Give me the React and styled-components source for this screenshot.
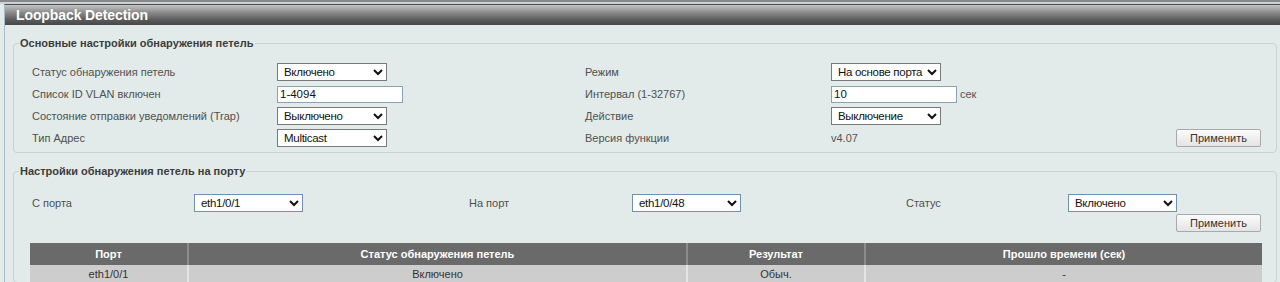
import styled, { createGlobalStyle } from 'styled-components';

const GlobalStyle = createGlobalStyle`
  html, body {
    margin: 0;
    padding: 0;
    background: #e2ebe9;
    font-family: "Liberation Sans", Arial, sans-serif;
  }
`;

const Page = styled.div`
  height: 282px;
  overflow: hidden;
  background: #e2ebe9;
`;

const TopStrip = styled.div`
  height: 2px;
  background: #8a8787;
  border-bottom: 2px solid #c6d3da;
`;

const Frame = styled.div`
  margin-left: 4px;
  border-left: 1px solid #a9bccb;
  border-top: 1px solid #4c4c4c;
  min-height: 278px;
`;

const TitleBar = styled.div`
  height: 20px;
  background: linear-gradient(to bottom, #c4c4c4 0%, #8f8f8f 35%, #5a5a5a 75%, #474747 100%);
  color: #fff;
  font-weight: bold;
  font-size: 14px;
  line-height: 20px;
  padding-left: 11px;
  letter-spacing: -0.1px;
`;

const Body = styled.div`
  padding: 12px 3px 0 8px;
`;

const Group = styled.fieldset`
  margin: 0 0 12px 0;
  padding: 0 0 0 5px;
  border: 1px solid #c9d2d2;
  border-radius: 4px;
  min-inline-size: 0;
`;

const Legend = styled.legend`
  padding: 0 2px 0 1px;
  font-size: 11px;
  font-weight: bold;
  color: #3c3c3c;
  line-height: 13px;
`;

const Inner = styled.div`
  padding: ${({ $pad }) => $pad};
`;

const FormGrid = styled.div`
  display: grid;
  grid-template-columns: ${({ $cols }) => $cols};
  grid-auto-rows: ${({ $row }) => $row};
  align-items: center;
`;

const Label = styled.span`
  font-size: 11px;
  color: #505050;
`;

const Select = styled.select`
  width: ${({ $w }) => $w}px;
  height: 18px;
  font-family: "Liberation Sans", Arial, sans-serif;
  font-size: 11.5px;
  letter-spacing: -0.3px;
  color: #111;
  background: #fff;
  border: 1px solid ${({ $blue }) => ($blue ? '#6f8fb3' : '#7a7a7a')};
  border-radius: 0;
  padding: 0 0 0 2px;
  outline: none;
`;

const Input = styled.input`
  width: 126px;
  height: 17px;
  box-sizing: border-box;
  font-family: "Liberation Sans", Arial, sans-serif;
  font-size: 11.5px;
  color: #111;
  background: #fff;
  border: 1px solid #8aa2b8;
  padding: 0 2px;
  outline: none;
`;

const Inline = styled.div`
  display: flex;
  align-items: center;
  gap: 3px;
`;

const Unit = styled.span`
  font-size: 11px;
  color: #555;
`;

const Version = styled.span`
  font-size: 11px;
  color: #555;
`;

const Apply = styled.button`
  width: 85px;
  height: 18px;
  padding: 0;
  font-family: "Liberation Sans", Arial, sans-serif;
  font-size: 11px;
  color: #333;
  background: linear-gradient(to bottom, #fbfbfb, #e4e4e4);
  border: 1px solid #a9a9a9;
  border-radius: 2px;
`;

const LastCell = styled.div`
  display: flex;
  align-items: center;
  justify-content: space-between;
`;

const ButtonRow = styled.div`
  display: flex;
  justify-content: flex-end;
  height: 20px;
  align-items: center;
`;

const Table = styled.table`
  margin-top: 10px;
  width: 1232px;
  margin-left: -2px;
  border-collapse: collapse;
  font-size: 11px;
`;

const Th = styled.th`
  background: #6a6a6a;
  color: #fff;
  font-weight: bold;
  height: 22px;
  padding: 0;
  border-left: 2px solid #8d8d8d;
  width: ${({ $w }) => $w}px;
  &:first-child { border-left: none; }
`;

const Td = styled.td`
  background: #cdcdcd;
  color: #333;
  height: 17px;
  padding: 0;
  text-align: center;
  border-left: 2px solid #e4e4e4;
  &:first-child { border-left: none; }
`;

const mainRows = [
  ['Статус обнаружения петель', 'select', 'Включено', 'Режим', 'select', 'На основе порта'],
  ['Список ID VLAN включен', 'input', '1-4094', 'Интервал (1-32767)', 'input', '10'],
  ['Состояние отправки уведомлений (Trap)', 'select', 'Выключено', 'Действие', 'select', 'Выключение'],
  ['Тип Адрес', 'select', 'Multicast', 'Версия функции', 'text', 'v4.07'],
];

const Control = ({ kind, value, unit }) => {
  if (kind === 'select') {
    return (
      <Select $w={110} defaultValue={value}>
        <option>{value}</option>
      </Select>
    );
  }
  if (kind === 'input') {
    return (
      <Inline>
        <Input defaultValue={value} />
        {unit && <Unit>{unit}</Unit>}
      </Inline>
    );
  }
  return <Version>{value}</Version>;
};

export default function App() {
  return (
    <>
      <GlobalStyle />
      <Page>
        <TopStrip />
        <Frame>
          <TitleBar>Loopback Detection</TitleBar>
          <Body>
            <Group>
              <Legend>Основные настройки обнаружения петель</Legend>
              <Inner $pad="11px 15px 3px 13px">
                <FormGrid $cols="245px 308px 246px 1fr" $row="22px">
                  {mainRows.map(([l1, k1, v1, l2, k2, v2], i) => (
                    <>
                      <Label key={`a${i}`}>{l1}</Label>
                      <Control key={`b${i}`} kind={k1} value={v1} />
                      <Label key={`c${i}`}>{l2}</Label>
                      {i === 3 ? (
                        <LastCell key={`d${i}`}>
                          <Control kind={k2} value={v2} />
                          <Apply>Применить</Apply>
                        </LastCell>
                      ) : (
                        <Control key={`d${i}`} kind={k2} value={v2} unit={i === 1 ? 'сек' : null} />
                      )}
                    </>
                  ))}
                </FormGrid>
              </Inner>
            </Group>
            <Group>
              <Legend>Настройки обнаружения петель на порту</Legend>
              <Inner $pad="15px 15px 0 13px">
                <FormGrid $cols="162px 275px 163px 274px 162px 1fr" $row="20px">
                  <Label>С порта</Label>
                  <Select $w={109} $blue defaultValue="eth1/0/1"><option>eth1/0/1</option></Select>
                  <Label>На порт</Label>
                  <Select $w={109} $blue defaultValue="eth1/0/48"><option>eth1/0/48</option></Select>
                  <Label>Статус</Label>
                  <Select $w={109} $blue defaultValue="Включено"><option>Включено</option></Select>
                </FormGrid>
                <ButtonRow>
                  <Apply>Применить</Apply>
                </ButtonRow>
                <Table>
                  <thead>
                    <tr>
                      <Th $w={157}>Порт</Th>
                      <Th $w={497}>Статус обнаружения петель</Th>
                      <Th $w={176}>Результат</Th>
                      <Th>Прошло времени (сек)</Th>
                    </tr>
                  </thead>
                  <tbody>
                    <tr>
                      <Td>eth1/0/1</Td>
                      <Td>Включено</Td>
                      <Td>Обыч.</Td>
                      <Td>-</Td>
                    </tr>
                  </tbody>
                </Table>
              </Inner>
            </Group>
          </Body>
        </Frame>
      </Page>
    </>
  );
}
